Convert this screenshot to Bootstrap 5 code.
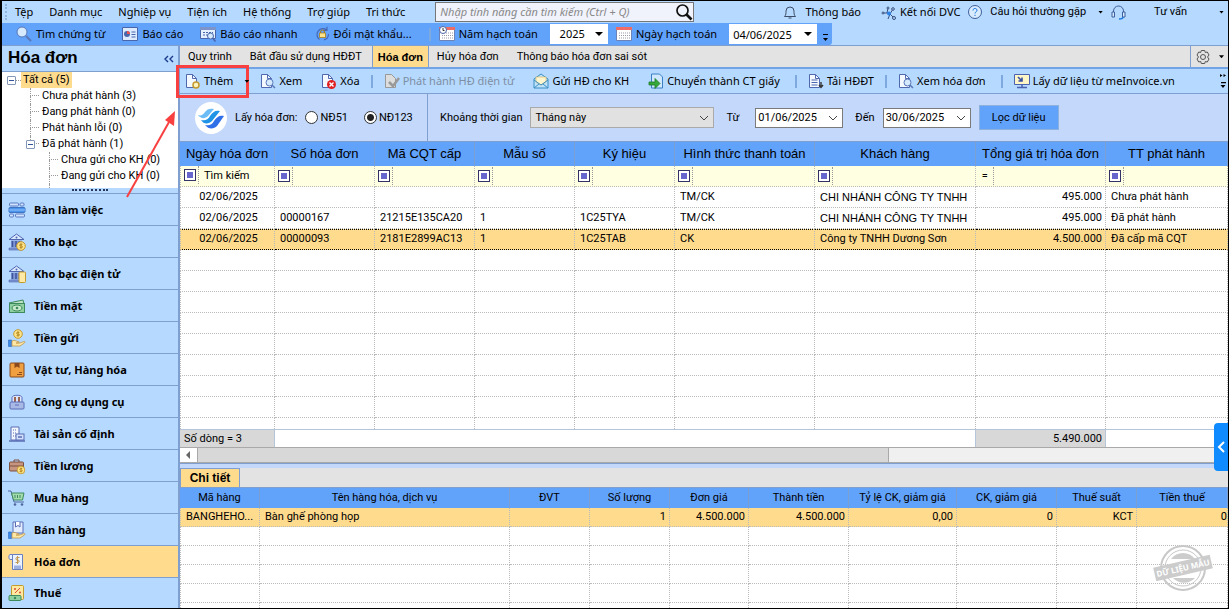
<!DOCTYPE html>
<html lang="vi">
<head>
<meta charset="utf-8">
<meta name="viewport" content="width=device-width, initial-scale=1">
<title>Hóa đơn</title>
<link href="https://cdn.jsdelivr.net/npm/bootstrap@5.3.0/dist/css/bootstrap.min.css" rel="stylesheet">
<style>
:root{--sky:#b5d9ff;--blue:#61a2fb;--line:#7f9fd0;--pick:#ffdb8e;--panel:#c3d8fb;--gray:#e3e3e3;
 --ui:"Noto Sans",sans-serif;--cell:Roboto,sans-serif;--head:"Liberation Sans",sans-serif;
 --chev:url("data:image/svg+xml,%3Csvg xmlns='http://www.w3.org/2000/svg' viewBox='0 0 10 10'%3E%3Cpath d='M1 3l4 4 4-4' fill='none' stroke='%23444'/%3E%3C/svg%3E");
 --tri:url("data:image/svg+xml,%3Csvg xmlns='http://www.w3.org/2000/svg' viewBox='0 0 8 8'%3E%3Cpath d='M0 2h8L4 6z'/%3E%3C/svg%3E")}
body{font:11px/16px var(--cell);color:#000;background:#fff}
a{color:inherit;text-decoration:none}
button{border:0;background:none;padding:0;color:inherit}
svg{flex:none;overflow:visible}
.app{height:100vh;border:1px solid #000;border-left-width:2px;overflow:hidden}
.line-b{border-bottom:1px solid var(--line)}
.sky{background:var(--sky)}
.ui{font-family:var(--ui)}
/* menu and quick bar */
.menubar{height:22px;background:var(--sky);padding-left:13px}
.menubar nav{gap:16px}
.find-box{width:259px;height:20px;border:1px solid #777;background:#f1f3fc;margin-left:30px}
.find-box input{border:0;background:none;outline:0;width:100%;padding:0 4px;font:italic 11px/16px var(--ui)}
.find-box input::placeholder{color:#888;opacity:1}
.links a{display:flex;align-items:center;margin-right:8px}
.links a:first-child{margin-right:20px}
.links a:last-child{margin-right:0}
.links .help .arrow{margin-left:12px}
.links .talk svg{margin-right:28px}
.links .talk .arrow{margin-left:32px}
.arrow{width:5px;height:3px;background:#000;clip-path:polygon(0 0,100% 0,50% 100%);display:inline-block;flex:none}
.grip{width:3px;height:16px;border-left:2px dotted #8fb4de;margin-left:-10px;margin-right:7px}
.quick{height:22px;width:830px;background:var(--blue);padding-left:14px;border-radius:0 0 3px 0}
.quick button{gap:4px;margin-right:17px}
.drop{border:0;border-radius:0;background:#fff var(--tri) right 5px center/8px 8px no-repeat;height:20px;font:11px/16px var(--ui);color:#000;appearance:none;padding:0 2px 0 4px}
.bar-sep{width:2px;height:13px;background:#7ea9de;flex:none}
/* sidebar */
.side{width:178px;border-right:2px solid var(--line);background:var(--sky)}
.side h1{font:bold 17px/24px var(--head);padding:0 6px;height:25px}
.tree{background:#fff;overflow:hidden}
.tree ul{list-style:none;padding:0;margin:0}
.tree .kids{margin-left:28px}
.tree .kids .kids{margin-left:7px}
.tree .kids li{position:relative;padding-left:12px;min-height:16px}
.tree .kids li::before{content:"";position:absolute;left:0;top:0;width:9px;height:8px;border:dotted #999;border-width:0 0 1px 1px}
.tree .kids li:not(.final)::after{content:"";position:absolute;left:0;top:8px;bottom:0;border-left:1px dotted #999}
.box{width:9px;height:9px;border:1px solid #8297b8;border-radius:1px;background:#fff;display:inline-flex;align-items:center;justify-content:center;flex:none}
.box::after{content:"";width:5px;height:1px;background:#33539a}
.tree .kids .box{position:absolute;left:-4px;top:4px;z-index:1}
.tree .root{padding-left:5px}
.tree .root span:nth-of-type(2){width:5px;border-top:1px dotted #999}
.tree .root a{background:var(--pick);padding:0 2px}
.split{height:6px}
.split i{width:36px;height:2px;border-top:2px dotted #27395c}
.mods a{display:flex;align-items:center;gap:8px;height:32px;border-top:1px solid var(--line);padding-left:6px;font:bold 11px/16px var(--ui)}
.mods a:last-child{height:31px}
.mods .on{background:var(--pick)}
/* main area */
.tabs{height:24px;background:var(--gray);border-bottom:2px solid #72a3e4}
.tabs a{padding:3px 9px 0 8px;border-right:1px solid transparent}
.tabs .on{background:var(--pick);font:bold 11px/16px var(--head);padding-inline:5px;border-left:1px solid var(--line);border-right-color:var(--line)}
.acts{height:26px;gap:11px;padding:0 2px 0 5px;background:var(--sky);border-bottom:1px solid var(--line)}
.acts button{display:flex;align-items:center;gap:3px;white-space:nowrap}
.acts button+button{margin-left:8px}
.filter{height:48px;background:var(--panel)}
.filter .src{width:248px;padding-left:15px;border-right:1px solid var(--line)}
.filter input[type=radio]{appearance:none;width:13px;height:13px;border:1px solid #333;border-radius:50%;background:#fff;margin:0 2px 0 0}
.filter input[type=radio]:checked{background:radial-gradient(#222 0 3px,#fff 4px)}
.fld{height:20px;border:1px solid #7a7a7a;border-radius:0;width:88px;padding:0 2px;background:#fff var(--chev) right 4px center/10px 10px no-repeat;font:11px/16px var(--cell);color:#000;appearance:none}
.fld.wide{width:184px;height:21px;background-color:#e1e1e1;border-color:#aaa;padding-left:4px}
.go{width:80px;height:25px;background:var(--blue);border:1px solid #8eb0dc}
.grid{table-layout:fixed;width:100%;border-collapse:separate;border-spacing:0}
.grid th{background:var(--blue);font:13px/18px var(--head);text-align:center;height:25px;padding:0;border-right:1px solid #7c9fd2;border-top:1px solid var(--line);white-space:nowrap}
.grid td{height:21px;padding:0 3px 0 5px;border-right:1px dotted #bbb;border-bottom:1px dotted #bbb;white-space:nowrap;overflow:hidden;line-height:16px}
.grid td:first-child{border-left:1px dotted #bbb}
.grid .seek td{background:#ffffe1;padding-left:3px;height:21px}
.grid .pick td{background:var(--pick)}
.master .pick td{border-top:1px dotted #000;border-bottom:1px dotted #000}
.arial{font-family:var(--head)}
.cond{display:inline-flex;width:15px;height:18px;align-items:center;border-right:1px dotted #999;vertical-align:top}
.cond+b{font-weight:400;line-height:19px;margin-left:5px}
.cond i{width:12px;height:12px;border:1px solid #336;background:#66c;box-shadow:inset 0 0 0 2px #fff}
.total{height:18px;line-height:17px;border-top:1px solid #b5c6da;display:grid;grid-template-columns:95px 1fr 130px 122px;background:#fff}
.total div{border-right:1px solid #b5c6da;padding:0 3px 0 4px}
.total .sum{background:#d8d8d8}
.scroll{height:17px;background:#f0f0f0;border:1px solid #a9a9a9;border-width:1px 0}
.scroll .thumb{background:#d8d8d8;border:1px solid #a9a9a9;border-width:0 1px;flex:0 0 66%}
.detail{border-top:1px solid var(--line);background:var(--panel);padding-top:4px}
.detail .strip{height:20px;background:var(--gray);border-bottom:1px solid var(--line)}
.detail .strip a{background:var(--pick);width:60px;border:1px solid var(--line);border-bottom:0;font:bold 12px/18px var(--head);text-align:center}
.detail .rows{height:120px;background:#fff;overflow:hidden}
.detail .grid th{font:11px/18px var(--cell);height:20px;border-top:0}
.detail .grid td{height:19px}
.stamp{position:absolute;right:15px;bottom:15px}
.pull{position:absolute;right:0;top:422px;width:14px;height:48px;background:#0f8bff;border-radius:4px 0 0 4px;color:#fff}
.mark-box{position:absolute;left:-4px;top:-4px;width:73px;height:33px;border:3px solid #f94040;pointer-events:none}
.mark-arrow{position:absolute;left:125px;top:110px;pointer-events:none}
</style>
</head>
<body>
<svg class="d-none">
 <symbol id="lens" viewBox="0 0 16 16"><circle cx="6" cy="6" r="5" fill="#d5eaff" stroke="#5a78b8"/><path d="M10 10l5 5" stroke="#5a78b8" stroke-width="2"/></symbol>
 <symbol id="page" viewBox="0 0 16 16"><path d="M1.500 1.500h6l4 4v9h-10z" fill="#f4f8ff" stroke="#5068b0"/><path d="M7.500 1.500v4h4" fill="none" stroke="#5068b0"/></symbol>
 <symbol id="view" viewBox="0 0 16 16"><use href="#page"/><circle cx="9.500" cy="9.500" r="3.500" fill="#d5eaff" stroke="#5a78b8"/><path d="M12 12l3 3" stroke="#5a78b8" stroke-width="1.500"/></symbol>
 <symbol id="cal" viewBox="0 0 16 16"><path d="M.5 2.500h15v12H.5z" fill="#fff" stroke="#6d83b5"/><path d="M0 1h16v3H0z" fill="#ee6b66"/><path d="M3 7h11M3 9.500h11M3 12h11" stroke="#99a" stroke-dasharray="1 1"/></symbol>
 <symbol id="bank" viewBox="0 0 18 18"><path d="M1 6.500L8.500 1 16 6.500z" fill="#dbe9ff" stroke="#4f66b0"/><circle cx="8.500" cy="4.500" r="1" fill="#4f66b0"/><path d="M3 7.500h11v7H3z" fill="#7f96d4"/><path d="M4.500 8v6M8 8v6M11.500 8v6" stroke="#3e539c" stroke-width="1.500"/><path d="M1 15h14v2H1z" fill="#7f96d4" stroke="#4f66b0" stroke-width=".6"/></symbol>
 <symbol id="coin" viewBox="0 0 10 10"><circle cx="5" cy="5" r="4.300" fill="#ffe38a" stroke="#c39a2c"/><path d="M6.500 3.300H4.300c-1 0-1 1.700 0 1.700h1.400c1 0 1 1.700 0 1.700H3.500M5 2.300v5.400" fill="none" stroke="#a87c12" stroke-width=".8"/></symbol>
 <symbol id="hand" viewBox="0 0 18 8"><path d="M.5 1h3v6.500h-3z" fill="#3f8ae8" stroke="#2866b8" stroke-width=".6"/><path d="M4 2c3-1.500 4 .3 6 .5 1.500 0 1.500 1.500 0 1.500H8h4l4-1.500c1.500 0 1 1.200 0 1.800L12 7H4z" fill="#ffe7a8" stroke="#b98f3c" stroke-width=".7"/></symbol>
</svg>

<div class="app d-flex flex-column position-relative">
 <header class="line-b sky ui">
  <div class="menubar d-flex align-items-center">
   <span class="grip"></span>
   <nav class="d-flex"><a href="#">Tệp</a><a href="#">Danh mục</a><a href="#">Nghiệp vụ</a><a href="#">Tiện ích</a><a href="#">Hệ thống</a><a href="#">Trợ giúp</a><a href="#">Tri thức</a></nav>
   <form class="find-box d-flex align-items-center"><input type="text" aria-label="Tìm tính năng" placeholder="Nhập tính năng cần tìm kiếm (Ctrl + Q)">
    <button type="button" aria-label="Tìm"><svg width="18" height="18" viewBox="0 0 18 18"><circle cx="7.500" cy="7.500" r="5.500" fill="none" stroke="#111" stroke-width="1.700"/><path d="M11.500 11.500l5 5" stroke="#111" stroke-width="2.600"/></svg></button></form>
   <div class="links d-flex align-items-center ms-auto pe-1">
    <a href="#"><svg class="me-2" width="14" height="14" viewBox="0 0 14 14"><path d="M1.500 11.500C3 10 3 8.500 3 6a4 4 0 018 0c0 2.500 0 4 1.500 5.500zM5.500 13h3" fill="none" stroke="#3d4c66"/></svg>Thông báo</a>
    <a href="#"><svg class="me-1" width="15" height="15" viewBox="0 0 15 15"><path d="M2 8h4l3 1 3-5M6 8l1-5M9 9l4 4M9 9l-2 5" stroke="#39507c" fill="none"/><g fill="#b5d9ff" stroke="#39507c"><circle cx="2" cy="8" r="1"/><circle cx="12" cy="4" r="1.300"/><circle cx="7" cy="3" r="1"/><circle cx="13" cy="13" r="1.500"/></g><circle cx="8" cy="8.500" r="2" fill="#2d82e8"/></svg>Kết nối DVC</a>
    <a href="#" class="help" style="font-family:var(--cell)"><svg class="me-2" width="14" height="14" viewBox="0 0 14 14"><circle cx="7" cy="7" r="6.500" fill="#d9ebff" stroke="#3d5f9c"/><path d="M5 5.500c0-3 4-2.500 4-.3C9 7 7 6.800 7 8.500M7 9.800v1.200" stroke="#1b78e0" fill="none"/></svg>Câu hỏi thường gặp<i class="arrow"></i></a>
    <a href="#" class="talk" style="font-family:var(--cell)"><svg width="15" height="15" viewBox="0 0 15 15"><path d="M2.500 8V6a5 5 0 0110 0v2" fill="none" stroke="#3d5f9c"/><path d="M1 7h2.500v5H1zM11.500 7H14v5h-2.500z" fill="#d9ebff" stroke="#3d5f9c"/><path d="M12 12c0 2-2 2-4 2" stroke="#1b78e0" stroke-width="1.500" fill="none"/></svg>Tư vấn<i class="arrow"></i></a>
   </div>
  </div>
  <div class="quick d-flex align-items-center">
   <button class="d-flex align-items-center"><svg width="16" height="16"><use href="#lens"/></svg>Tìm chứng từ</button>
   <button class="d-flex align-items-center"><svg width="16" height="16" viewBox="0 0 16 16"><path d="M.5 1.500h15v13H.5z" fill="#dcebff" stroke="#4a66aa"/><circle cx="5" cy="8" r="3" fill="#4a66aa"/><path d="M5 8V5a3 3 0 013 3z" fill="#e8554f"/><path d="M9.500 6h4M9.500 8.500h4M9.500 11h4" stroke="#4a66aa"/></svg>Báo cáo</button>
   <button class="d-flex align-items-center"><svg width="16" height="16" viewBox="0 0 16 16"><path d="M.5 1.500h15v11H.5z" fill="#e4efff" stroke="#4a66aa"/><path d="M0 1h16v3H0z" fill="#7d94cb"/><path d="M3 6.500h10M3 9h5" stroke="#4a66aa" stroke-dasharray="2 1"/><circle cx="10.500" cy="10" r="3" fill="#d5eaff" stroke="#4a66aa"/><path d="M12.500 12l3 3.500" stroke="#4a66aa" stroke-width="1.500"/></svg>Báo cáo nhanh</button>
   <button class="d-flex align-items-center"><svg width="15" height="16" viewBox="0 0 15 16"><path d="M11.500 3.700A6 6 0 104.500 13.500M13.500 8A6 6 0 019 13.800M12 .8v3.500H8.500" fill="none" stroke="#4768b5" stroke-width="1.200"/><path d="M5.500 7V6a2 2 0 014 0v1" fill="none" stroke="#a87c12"/><path d="M4.500 7h6v4.500h-6z" fill="#ffe38a" stroke="#a87c12" stroke-width=".8"/></svg>Đổi mật khẩu...</button>
   <span class="bar-sep me-2"></span>
   <label class="d-flex align-items-center gap-1 me-2" for="yr"><svg width="16" height="16"><use href="#cal"/><circle cx="4" cy="4" r="3.500" fill="#fff" stroke="#4a66aa"/><path d="M4 2v2.500h1.500" stroke="#333" fill="none"/></svg>Năm hạch toán</label>
   <select id="yr" class="drop ms-1 me-2" style="width:58px"><option>&nbsp; 2025</option></select>
   <label class="d-flex align-items-center gap-1 me-2" for="dt"><svg width="16" height="16"><use href="#cal"/></svg>Ngày hạch toán</label>
   <input id="dt" type="text" class="drop ms-1" style="width:88px" value="04/06/2025">
   <svg class="ms-auto me-1 mt-2" width="5" height="8" viewBox="0 0 5 8"><path d="M0 .5h5" stroke="#000"/><path d="M0 4h5L2.500 7z"/></svg>
  </div>
 </header>

 <div class="d-flex flex-grow-1" style="min-height:0">
  <aside class="side d-flex flex-column flex-shrink-0">
   <div class="line-b d-flex justify-content-between"><h1 class="m-0">Hóa đơn</h1><button class="me-1" aria-label="Thu gọn"><svg width="10" height="8" viewBox="0 0 10 8"><path d="M4 1L1 4l3 3M9 1L6 4l3 3" fill="none" stroke="#1c3a8c" stroke-width="1.400"/></svg></button></div>
   <div class="tree flex-grow-1">
    <div class="root d-flex align-items-center"><span class="box"></span><span></span><a href="#">Tất cả (5)</a></div>
    <ul class="kids">
     <li><a href="#">Chưa phát hành (3)</a></li><li><a href="#">Đang phát hành (0)</a></li><li><a href="#">Phát hành lỗi (0)</a></li>
     <li class="final"><span class="box"></span><a href="#">Đã phát hành (1)</a>
      <ul class="kids"><li><a href="#">Chưa gửi cho KH (0)</a></li><li><a href="#">Đang gửi cho KH (0)</a></li><li></li></ul></li>
    </ul>
   </div>
   <div class="split d-flex justify-content-center align-items-center"><i></i></div>
   <nav class="mods">
    <a href="#"><svg width="18" height="18" viewBox="0 0 18 18"><g fill="#cfe2ff" stroke="#5b7bc0"><rect x="1.500" y="2" width="9" height="3" rx="1"/><rect x="12" y="2" width="4" height="3" rx="1"/><rect x="1.500" y="13" width="4" height="3" rx="1"/><rect x="7.500" y="13" width="9" height="3" rx="1"/></g><rect x="1" y="6.500" width="16" height="5" rx="1" fill="#4c95ec" stroke="#3f74c4"/><path d="M1 9h16" stroke="#8fc0fa"/></svg>Bàn làm việc</a>
    <a href="#"><svg width="18" height="18"><use href="#bank"/><use href="#coin" x="8" y="8" width="10" height="10"/></svg>Kho bạc</a>
    <a href="#"><svg width="18" height="18" viewBox="0 0 18 18"><use href="#bank"/><rect x="11" y="7" width="6.500" height="10.500" rx="1" fill="#ffe9a6" stroke="#c39a2c"/></svg>Kho bạc điện tử</a>
    <a href="#"><svg width="18" height="18" viewBox="0 0 18 18"><path d="M1 6l14-3 1 4" fill="#bfe3c4" stroke="#3d8a5d"/><rect x="1.500" y="6.500" width="15" height="9" fill="#8fd0a0" stroke="#3d8a5d"/><ellipse cx="9" cy="11" rx="5" ry="3" fill="#c8eacb" stroke="#3d8a5d"/><circle cx="9" cy="11" r="1.300" fill="#3d8a5d"/></svg>Tiền mặt</a>
    <a href="#"><svg width="18" height="18"><use href="#coin" x="5" y="0" width="10" height="10"/><use href="#hand" x="0" y="10" width="18" height="8"/></svg>Tiền gửi</a>
    <a href="#"><svg width="18" height="18" viewBox="0 0 18 18"><rect x="2" y="2" width="14" height="14" rx="1" fill="#f0a040" stroke="#8a4a1c"/><path d="M6.500 2h5v5L9 5.500 6.500 7z" fill="#8a4a1c"/><path d="M9 13.500h5M11 11.500h3" stroke="#8a4a1c"/></svg>Vật tư, Hàng hóa</a>
    <a href="#"><svg width="18" height="18" viewBox="0 0 18 18"><path d="M4 9V4.500C4 1.500 14 1.500 14 4.500V9" fill="#dce6ff" stroke="#5b6db5"/><path d="M7 4v5M11 4v5" stroke="#9a6550" stroke-width="2"/><rect x="2" y="9" width="14" height="7" rx="1" fill="#a9b9e6" stroke="#5b6db5"/><path d="M7 12h4" stroke="#5b6db5"/></svg>Công cụ dụng cụ</a>
    <a href="#"><svg width="18" height="18" viewBox="0 0 18 18"><path d="M3 2h8v13H3z" fill="#f1f6ff" stroke="#5b6db5"/><path d="M5 5h4M5 8h4M5 11h3" stroke="#5b6db5" stroke-dasharray="1 1"/><rect x="8" y="9" width="8" height="6" fill="#d3e0fb" stroke="#5b6db5"/><path d="M1 16h16M10 12h4" stroke="#5b6db5" stroke-width="1.500"/></svg>Tài sản cố định</a>
    <a href="#"><svg width="18" height="18" viewBox="0 0 18 18"><path d="M6 5V3h5v2" fill="none" stroke="#7d4f3e"/><rect x="1.500" y="5" width="14" height="9" rx="1" fill="#c59580" stroke="#7d4f3e"/><path d="M2 9h13" stroke="#7d4f3e"/><use href="#coin" x="8.500" y="8.500" width="9" height="9"/></svg>Tiền lương</a>
    <a href="#"><svg width="18" height="18" viewBox="0 0 18 18"><path d="M0 2h3l3 11h10" fill="none" stroke="#4f66a0"/><path d="M3.500 4H16l-1.500 7H5.500z" fill="#a5dcae" stroke="#3d8a5d"/><path d="M7 6v3M9.500 6v3M12 6v3" stroke="#3d8a5d"/><circle cx="7" cy="15.500" r="1.300" fill="#4f66a0"/><circle cx="14" cy="15.500" r="1.300" fill="#4f66a0"/></svg>Mua hàng</a>
    <a href="#"><svg width="18" height="18" viewBox="0 0 18 18"><path d="M5 1h10v11H5z" fill="#e3edff" stroke="#5b6db5"/><path d="M7.500 1v5L10 4.500 12 6V1" fill="#fff" stroke="#5b6db5"/><use href="#hand" x="0" y="10" width="18" height="8"/></svg>Bán hàng</a>
    <a href="#" class="on"><svg width="18" height="18" viewBox="0 0 18 18"><path d="M4.500 1.500H2c-1.500 0-1.500 5 0 5h2.500zM4.500 1.500h10v15h-10z" fill="#eaf1ff" stroke="#6a7fc0"/><path d="M6 12.500h7V16H6z" fill="#9db0e0"/><path d="M11.500 4.500H9c-1.500 0-1.500 2.500 0 2.500h1c1.500 0 1.500 2.500 0 2.500H7.500M9.500 3v8" fill="none" stroke="#c39a4c"/></svg>Hóa đơn</a>
    <a href="#"><svg width="18" height="18" viewBox="0 0 18 18"><rect x="3.500" y="1.500" width="12" height="14" rx="1" fill="#ffe8a0" stroke="#c39a2c"/><path d="M7 9l5-5" stroke="#d84a3a"/><circle cx="7" cy="5" r="1" fill="#d84a3a"/><circle cx="12" cy="8.500" r="1" fill="#d84a3a"/><rect x="1" y="11.500" width="12" height="5" rx="1" fill="#8fd0a0" stroke="#3d8a5d"/><circle cx="7" cy="14" r="1.200" fill="#3d8a5d"/></svg>Thuế</a>
   </nav>
  </aside>

  <main class="d-flex flex-column flex-grow-1 position-relative" style="min-width:0">
   <nav class="tabs d-flex"><a href="#">Quy trình</a><a href="#">Bắt đầu sử dụng HĐĐT</a><a href="#" class="on">Hóa đơn</a><a href="#">Hủy hóa đơn</a><a href="#">Thông báo hóa đơn sai sót</a>
    <button class="ms-auto d-flex align-items-center px-1" style="border-left:1px solid var(--line)" aria-label="Tùy chọn"><svg width="16" height="16" viewBox="0 0 16 16"><path d="M6.300 1.500h3.400l.6 2 2-.5 1.700 3L12.500 8l1.500 2-1.700 3-2-.5-.6 2H6.300l-.6-2-2 .5L2 10l1.500-2L2 6l1.700-3 2 .5z" fill="none" stroke="#555" stroke-linejoin="round"/><circle cx="8" cy="8" r="2.500" fill="none" stroke="#555"/></svg><i class="arrow ms-2"></i></button></nav>

   <div class="acts d-flex align-items-center ui position-relative">
    <span class="mark-box"></span>
    <button><svg width="16" height="16"><use href="#page"/><circle cx="11" cy="12" r="3" fill="#fff3c0" stroke="#c39a2c" stroke-width="1.500"/></svg>Thêm<i class="arrow ms-2"></i></button>
    <button class="ms-0"><svg width="16" height="16"><use href="#view"/></svg>Xem</button>
    <button><svg width="16" height="16"><use href="#page"/><circle cx="10.500" cy="11.500" r="4.500" fill="#e02020"/><path d="M8.500 9.500l4 4M12.500 9.500l-4 4" stroke="#fff" stroke-width="1.400"/></svg>Xóa</button>
    <span class="bar-sep"></span>
    <button style="color:#7f8fa3"><svg width="16" height="16" viewBox="0 0 16 16"><path d="M1.500 1.500h6l4 4v9h-10z" fill="#ddd" stroke="#999"/><path d="M5 9l4 4 6-8" fill="none" stroke="#999" stroke-width="2.500"/></svg>Phát hành HĐ điện tử</button>
    <button><svg width="16" height="16" viewBox="0 0 16 16"><path d="M1 6l7-5 7 5v9H1z" fill="#bfe2fb" stroke="#3b8fc4"/><path d="M3 4h10v5l-5 3-5-3z" fill="#fff6d0" stroke="#d6b96a" stroke-width=".7"/><path d="M1 7l7 5 7-5M1 15l5-4M15 15l-5-4" fill="none" stroke="#3b8fc4"/></svg>Gửi HĐ cho KH</button>
    <button><svg width="16" height="16" viewBox="0 0 16 16"><path d="M3.500 1h8l3 3v11h-11z" fill="#cfe8ff" stroke="#3b7fc4"/><path d="M1 9h6V5.500L12 10.500 7 15.500V12H1z" fill="#35a83a" stroke="#1f7a26" stroke-width=".8"/></svg>Chuyển thành CT giấy</button>
    <span class="bar-sep ms-1"></span>
    <button><svg width="16" height="16"><use href="#page"/><path d="M3.500 7h6M3.500 9.500h6M3.500 12h6" stroke="#5068b0"/><path d="M13 9v5M11 12l2 2.500 2-2.500" stroke="#333" stroke-width="1.400" fill="none"/></svg>Tải HĐĐT</button>
    <span class="bar-sep"></span>
    <button><svg width="16" height="16"><use href="#view"/></svg>Xem hóa đơn</button>
    <span class="bar-sep ms-1"></span>
    <button><svg width="16" height="16" viewBox="0 0 16 16"><path d="M.5 1.500h15v10H.5z" fill="#fff6c8" stroke="#4a62b0"/><path d="M4 4l4 4M8 4.500V8H4.500" stroke="#3a4fa0" stroke-width="1.600" fill="none"/><path d="M8 12v2M3 14.500h10" stroke="#4a62b0" stroke-width="1.500"/></svg>Lấy dữ liệu từ meInvoice.vn</button>
    <svg class="ms-auto" width="6" height="14" viewBox="0 0 6 14"><path d="M0 0l2.500 1.500L0 3zM3.500 0L6 1.500 3.500 3zM1 8h5v1.300H1zM.5 11h5L3 14z"/></svg>
   </div>

   <div class="filter d-flex align-items-center">
    <div class="src d-flex align-items-center align-self-stretch">
     <svg class="me-2" width="32" height="32" viewBox="0 0 32 32"><circle cx="16" cy="16" r="16" fill="#fff"/><path d="M3 13c3 4 7 4 10 1l6-7c-4-1-7 0-9 3-2 3-4 4-7 3z" fill="#6cbcf5"/><path d="M6 18c3 5 8 4 11 1l8-10c-5-1-7 1-10 5-2 4-5 5-9 4z" fill="#1f93e6"/><path d="M10 23c4 5 9 4 12 1l7-10c-5-1-7 1-10 5-2 4-5 5-9 4z" fill="#2f6fe8"/></svg>
     <span class="me-2">Lấy hóa đơn:</span>
     <label class="d-flex align-items-center me-3"><input type="radio" name="nd">NĐ51</label>
     <label class="d-flex align-items-center"><input type="radio" name="nd" checked>NĐ123</label>
    </div>
    <label class="ms-2 me-1 ps-1" for="per">Khoảng thời gian</label>
    <select id="per" class="fld wide ms-1"><option>Tháng này</option></select>
    <label class="ms-2 me-3 ps-1" for="d1">Từ</label><input id="d1" class="fld" type="text" value="01/06/2025">
    <label class="ms-2 me-2 ps-1" for="d2">Đến</label><input id="d2" class="fld" type="text" value="30/06/2025">
    <button class="go ms-2">Lọc dữ liệu</button>
   </div>

   <div class="master flex-grow-1 overflow-hidden" style="min-height:0">
    <table class="grid">
     <colgroup><col style="width:95px"><col style="width:100px"><col style="width:100px"><col style="width:100px"><col style="width:100px"><col style="width:140px"><col><col style="width:130px"><col style="width:122px"></colgroup>
     <thead><tr><th>Ngày hóa đơn</th><th>Số hóa đơn</th><th>Mã CQT cấp</th><th>Mẫu số</th><th>Ký hiệu</th><th>Hình thức thanh toán</th><th>Khách hàng</th><th>Tổng giá trị hóa đơn</th><th>TT phát hành</th></tr></thead>
     <tbody id="inv">
      <tr class="seek"><td><span class="cond"><i></i></span><b>Tìm kiếm</b></td><td><span class="cond"><i></i></span></td><td><span class="cond"><i></i></span></td><td><span class="cond"><i></i></span></td><td><span class="cond"><i></i></span></td><td><span class="cond"><i></i></span></td><td><span class="cond"><i></i></span></td><td><span class="cond">&nbsp;=</span></td><td><span class="cond"><i></i></span></td></tr>
      <tr><td class="text-center">02/06/2025</td><td></td><td></td><td></td><td></td><td>TM/CK</td><td class="arial">CHI NHÁNH CÔNG TY TNHH</td><td class="text-end">495.000</td><td>Chưa phát hành</td></tr>
      <tr><td class="text-center">02/06/2025</td><td>00000167</td><td>21215E135CA20</td><td>1</td><td>1C25TYA</td><td>TM/CK</td><td class="arial">CHI NHÁNH CÔNG TY TNHH</td><td class="text-end">495.000</td><td>Đã phát hành</td></tr>
      <tr class="pick"><td class="text-center">02/06/2025</td><td>00000093</td><td>2181E2899AC13</td><td>1</td><td>1C25TAB</td><td>CK</td><td>Công ty TNHH Dương Sơn</td><td class="text-end">4.500.000</td><td>Đã cấp mã CQT</td></tr>
     </tbody>
    </table>
   </div>
   <div class="total"><div class="sum">Số dòng = 3</div><div></div><div class="sum text-end">5.490.000</div><div class="border-0"></div></div>
   <div class="scroll d-flex"><button class="bg-white px-1" aria-label="Cuộn trái"><svg class="d-block" width="9" height="8" viewBox="0 0 9 8"><path d="M6 0v8L2 4z" fill="#666"/></svg></button><span class="thumb"></span></div>

   <section class="detail">
    <nav class="strip d-flex"><a href="#">Chi tiết</a></nav>
    <div class="rows">
     <table class="grid">
      <colgroup><col style="width:80px"><col><col style="width:80px"><col style="width:80px"><col style="width:79px"><col style="width:100px"><col style="width:108px"><col style="width:100px"><col style="width:80px"><col style="width:91px"></colgroup>
      <thead><tr><th>Mã hàng</th><th>Tên hàng hóa, dịch vụ</th><th>ĐVT</th><th>Số lượng</th><th>Đơn giá</th><th>Thành tiền</th><th>Tỷ lệ CK, giảm giá</th><th>CK, giảm giá</th><th>Thuế suất</th><th>Tiền thuế</th></tr></thead>
      <tbody id="det"><tr class="pick"><td>BANGHEHO...</td><td>Bàn ghế phòng họp</td><td></td><td class="text-end">1</td><td class="text-end">4.500.000</td><td class="text-end">4.500.000</td><td class="text-end">0,00</td><td class="text-end">0</td><td class="text-end">KCT</td><td class="text-end pe-0">0</td></tr></tbody>
     </table>
    </div>
   </section>
   <svg class="stamp" width="60" height="50" viewBox="0 0 60 50"><g fill="none" stroke="#c8c8c8"><circle cx="30" cy="25" r="22" stroke-width="2"/><circle cx="30" cy="25" r="18"/></g><path d="M18 16a15 15 0 0124 0zM20 35a15 15 0 0022 0z" fill="#ccc"/><g transform="rotate(-13 30 25)"><rect x="1" y="18" width="58" height="14" fill="#ccc"/><text x="30" y="28" text-anchor="middle" fill="#fff" font-family="Noto Sans" font-weight="bold" font-size="8">DỮ LIỆU MẪU</text></g></svg>
  </main>
 </div>
 <button class="pull" aria-label="Mở bảng bên"><svg width="8" height="12" viewBox="0 0 8 12"><path d="M7 1L2 6l5 5" fill="none" stroke="#fff" stroke-width="2"/></svg></button>
 <svg class="mark-arrow" width="52" height="88" viewBox="0 0 52 88"><path d="M0 86L42 11" stroke="#f94040" stroke-width="2"/><path d="M48 0l-1 15-9-6z" fill="#f94040"/></svg>
</div>
<script>
// pad both grids with blank rows, as the desktop client does
for (const [id, n] of [['inv', 9], ['det', 5]]) {
  const body = document.getElementById(id), cols = body.rows[0].cells.length;
  for (let i = 0; i < n; i++) { const r = body.insertRow(); for (let c = 0; c < cols; c++) r.insertCell(); }
}
</script>
<script src="https://cdn.jsdelivr.net/npm/bootstrap@5.3.0/dist/js/bootstrap.bundle.min.js"></script>
</body>
</html>
